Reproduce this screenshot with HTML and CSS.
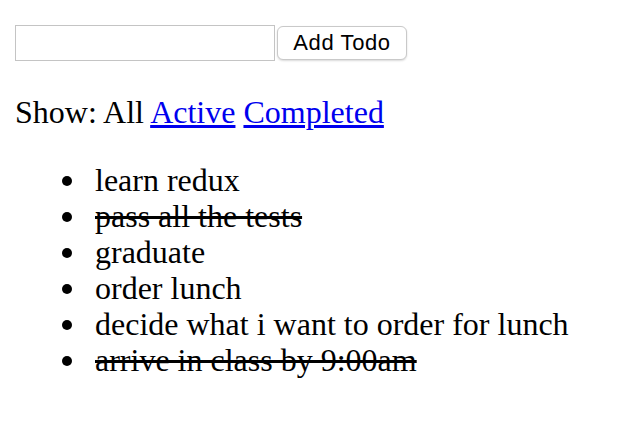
FILE: index.html
```html
<!DOCTYPE html>
<html>
<head>
<meta charset="utf-8">
<link rel="stylesheet" href="styles.css">
</head>
<body>
<div class="app">
  <form class="add-form">
    <input class="todo-input" type="text">
    <button class="add-btn" type="button">Add Todo</button>
  </form>
  <p class="filters">Show: All <a href="#">Active</a> <a href="#">Completed</a></p>
  <ul class="todos">
    <li><span>learn redux</span></li>
    <li><span class="done">pass all the tests</span></li>
    <li><span>graduate</span></li>
    <li><span>order lunch</span></li>
    <li><span>decide what i want to order for lunch</span></li>
    <li><span class="done">arrive in class by 9:00am</span></li>
  </ul>
</div>
</body>
</html>
```
FILE: styles.css
```css
html, body { background: #fff; }
body {
  margin: 15px;
  font-family: "Liberation Serif", "Times New Roman", serif;
  font-size: 32px;
  line-height: 36px;
  color: #000;
}
.add-form {
  display: flex;
  align-items: center;
  gap: 2px;
  padding-top: 10px;
  margin: 0;
}
.todo-input {
  box-sizing: border-box;
  width: 260px;
  height: 36px;
  border: 1px solid #c4c4c4;
  margin: 0;
  padding: 2px 4px;
  font-size: 20px;
}
.add-btn {
  box-sizing: border-box;
  width: 130px;
  height: 34px;
  margin: 0;
  padding: 0;
  border: 1px solid #c9c9c9;
  border-radius: 6px;
  background: #fff;
  box-shadow: 0 1px 2px rgba(0,0,0,0.15);
  font-family: "Liberation Sans", Arial, sans-serif;
  font-size: 22px;
  letter-spacing: 0.6px;
  line-height: 1;
  color: #000;
}
.filters { margin: 33px 0 32px; }
.filters a { color: #0000ee; }
.todos {
  margin: 32px 0;
  padding-left: 80px;
  list-style: none;
}
.todos li::before {
  content: "";
  display: inline-block;
  width: 10px;
  height: 10px;
  border-radius: 50%;
  background: #000;
  margin-left: -33px;
  margin-right: 23px;
  vertical-align: 5px;
}
.done { text-decoration: line-through; }
```
